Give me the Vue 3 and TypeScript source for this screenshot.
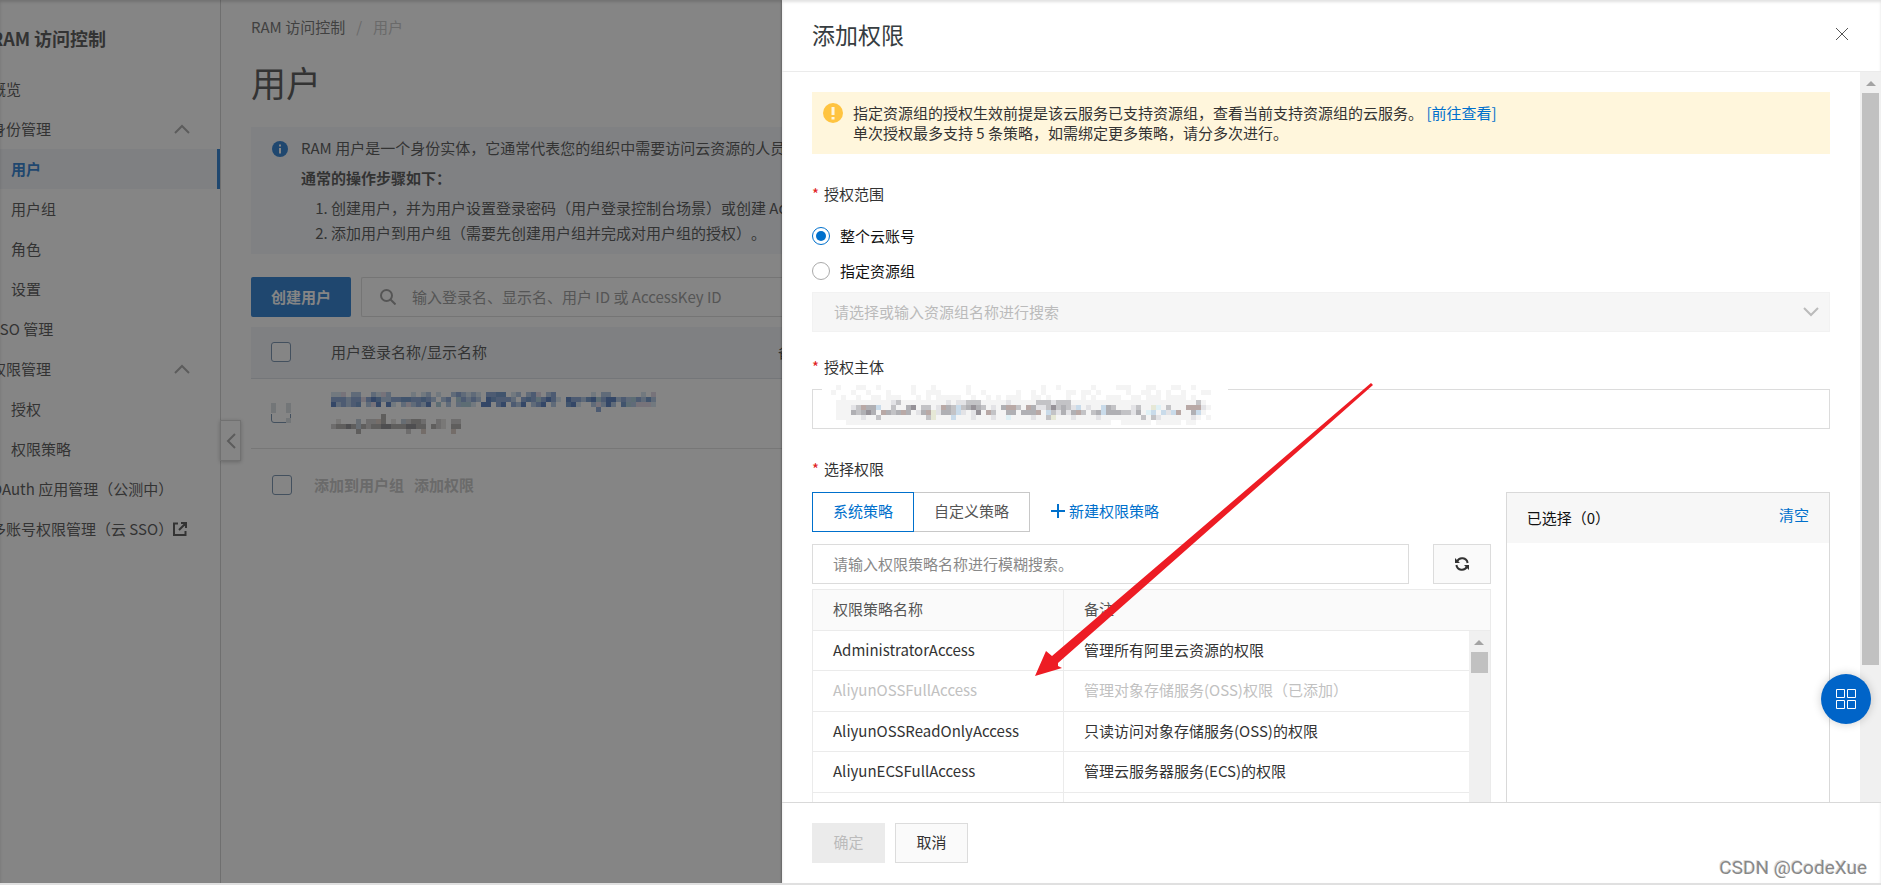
<script setup lang="ts">
import { ref } from 'vue'

interface NavItem {
  label: string
  child?: boolean
  group?: boolean
  active?: boolean
  external?: boolean
}

interface Policy {
  name: string
  note: string
  added?: boolean
}

interface Cell {
  x: number
  y: number
  fill: string
}

const navItems: NavItem[] = [
  { label: '概览' },
  { label: '身份管理', group: true },
  { label: '用户', child: true, active: true },
  { label: '用户组', child: true },
  { label: '角色', child: true },
  { label: '设置', child: true },
  { label: 'SSO 管理' },
  { label: '权限管理', group: true },
  { label: '授权', child: true },
  { label: '权限策略', child: true },
  { label: 'OAuth 应用管理（公测中）' },
  { label: '多账号权限管理（云 SSO）', external: true },
]

const policies: Policy[] = [
  { name: 'AdministratorAccess', note: '管理所有阿里云资源的权限' },
  { name: 'AliyunOSSFullAccess', note: '管理对象存储服务(OSS)权限（已添加）', added: true },
  { name: 'AliyunOSSReadOnlyAccess', note: '只读访问对象存储服务(OSS)的权限' },
  { name: 'AliyunECSFullAccess', note: '管理云服务器服务(ECS)的权限' },
  { name: 'AliyunECSReadOnlyAccess', note: '只读访问云服务器服务(ECS)的权限' },
]

const scope = ref('account')
const keyword = ref('')
const userKeyword = ref('')

// Each character is one 5px block; a dot leaves the block empty.
function blocks(rows: string[], palette: Record<string, string>): Cell[] {
  const cells: Cell[] = []
  rows.forEach((row, r) => {
    Array.from(row).forEach((key, c) => {
      const fill = palette[key]
      if (fill) cells.push({ x: c * 5, y: r * 5, fill })
    })
  })
  return cells
}

const bluePalette = {
  a: '#cfe0ef', b: '#a3bfe0', c: '#7396cf', d: '#5585c4', e: '#3565b4', f: '#dcd2e4', g: '#9cc4d4',
}
const nameCells = blocks(
  [
    'aaf.bb..bafb....a.ab.a..bcbaba.ccdd.ab.bcf.bc.......a.bb......a.f',
    'cccbccfcedbbccddccdcb.bc.gcbcb.edcccb.cdcgceca.eccbdegceebcbgcbdb',
    'ebcbcd.bfe.ea.bfbcbe.g.b.bgga.ee.ce.cbe.bce.b..dea..bfbeb.dgbfffa',
    '.....................................................c...........',
  ],
  bluePalette,
)
const grayPalette = { a: '#e2dfdb', b: '#c6c4c2', c: '#a09d9b', d: '#77777c', e: '#d4c4b8', f: '#b4c2d2' }
const displayCells = blocks(
  [
    '..........c...............',
    '.a...f.bbec.a.fbccb..ba.bb',
    'bccdcfcbccddcccddcc.cba.cc',
    '.....c.........b..e.....e.',
  ],
  grayPalette,
)
const checkCells = blocks(['f..f', 'f..f', '....', '...f'], { f: '#d3d9df' })
const haloCells = blocks(
  [
    '.a...aa..a......a...a......a..............a..a......a....aaa...aa...aa..a...',
    'a...a..a...a....a..aaa.....a..a......a..a.a....aa.aa.a.....a..aa.a.a..a...aa',
    '..a..a..aa.aaa...a.a.aaaaa..a..a.a.aaa..aa.a...a..a.a..aaa..aa.aaa.aaaa.a...',
    '.aaaaaaaaaaaaaaaaaaaaaaaaaaaaaaaaaaaaaaaaaaaaaaaaaaaaaaaaaaaaaaaaaaaaaaaaaa.',
    '.aaaaaaaaaaaaaaaaaaaaaaaaaaaaaaaaaaaaaaaaaaaaaaaaaaaaaaaaaaaaaaaaaaaaaaaaaaa',
    '.aaaaaaaaaaaaaaaaaaaaaaaaaaaaaaaaaaaaaaaaaaaaaaaaaaaaaaaaaaaaaaaaaaaaaaaaaa.',
    '.aaaaaaaaaaaaaaaaaaaaaaaaaaaaaaaaaaaaaaaaaaaaaaaaaaaaaaaaaaaaaaaaaaaaaaaaa.a',
    '...aaaaaaaaaaaaaaaaaaaaaaaaaaaaaaaaaaaaaaaaaaaaaaaaaaaaa..aaaaaa.aaaaa.aa...',
  ],
  { a: '#f4f4f4' },
)
const subjectCells = blocks(
  [
    '........ab.........a.aabbb.....a.....bbbabbb.........................b..',
    'abeccf..b..cd.bb.aecbfbcdcb.a.ceeb.ecaabdbcbaf.a..fcb...ab..gh.b...eeea.',
    'cbcdc.ecbcec.acegaccbfa.ad.eb..cc.ccce.fbacaceb.bcfcccbbac.hf.fafe..cf..',
    '..a..b.........bg...f...a...a..h....a..bg...a....a........b.ba......a...',
  ],
  {
    a: '#e3e3e6', b: '#c3c3c6', c: '#b0b0b4', d: '#969298', e: '#b9a9a6', f: '#c9dbea', g: '#e6e8d6', h: '#dff0f5',
  },
)
</script>

<template>
  <div class="screen">
    <div class="console">
      <aside class="sidebar">
        <div class="sidebar-inner">
          <div class="product">RAM 访问控制</div>
          <nav>
            <a
              v-for="item in navItems"
              :key="item.label"
              href="#"
              class="nav-item"
              :class="{ child: item.child, active: item.active }"
            >
              <span>{{ item.label }}</span>
              <svg v-if="item.external" class="external" viewBox="0 0 14 14" width="14" height="14">
                <path d="M5 1.5H1v11.500h11.500V9M8 1h5v5M12.500 1.500L6 8" />
              </svg>
              <svg v-if="item.group" class="fold" viewBox="0 0 16 10" width="16" height="10">
                <path d="M1 9l7-7 7 7" />
              </svg>
            </a>
          </nav>
        </div>
      </aside>

      <button class="collapse" type="button" aria-label="收起">
        <svg viewBox="0 0 10 16" width="10" height="16"><path d="M9 1L2 8l7 7" /></svg>
      </button>

      <main class="main">
        <div class="crumbs">
          <a href="#">RAM 访问控制</a><span class="slash">/</span><span class="here">用户</span>
        </div>
        <h1>用户</h1>

        <section class="intro">
          <svg class="info" viewBox="0 0 16 16" width="16" height="16">
            <circle cx="8" cy="8" r="8" fill="#0064c8" />
            <path d="M7 3.500h2v2H7zM7 7h2v5.500H7z" fill="#fff" />
          </svg>
          <div class="intro-text">
            <p>RAM 用户是一个身份实体，它通常代表您的组织中需要访问云资源的人员或应用程序。</p>
            <p class="strong">通常的操作步骤如下：</p>
            <ol>
              <li>创建用户，并为用户设置登录密码（用户登录控制台场景）或创建 AccessKey。</li>
              <li>添加用户到用户组（需要先创建用户组并完成对用户组的授权）。</li>
            </ol>
          </div>
        </section>

        <div class="tools">
          <button class="create" type="button">创建用户</button>
          <label class="user-search">
            <svg viewBox="0 0 16 16" width="16" height="16">
              <circle cx="6.500" cy="6.500" r="5.500" /><path d="M10.500 10.500L15.500 15.500" />
            </svg>
            <input
              v-model="userKeyword"
              type="text"
              placeholder="输入登录名、显示名、用户 ID 或 AccessKey ID"
              aria-label="搜索用户"
            />
          </label>
        </div>

        <table class="users">
          <thead>
            <tr>
              <th class="pick"><input type="checkbox" aria-label="全选" /></th>
              <th class="login">用户登录名称/显示名称</th>
              <th>备注</th>
            </tr>
          </thead>
          <tbody>
            <tr>
              <td class="pick">
                <span class="masked">
                  <input type="checkbox" aria-label="选择用户" />
                  <svg viewBox="0 0 20 20" width="20" height="20">
                    <path d="M0 0h20v11H0z" fill="#fff" />
                    <rect v-for="(c, i) in checkCells" :key="i" :x="c.x" :y="c.y" width="5" height="5" :fill="c.fill" />
                  </svg>
                </span>
              </td>
              <td>
                <div class="mosaics">
                  <svg viewBox="0 0 330 20" width="330" height="20">
                    <rect v-for="(c, i) in nameCells" :key="i" :x="c.x" :y="c.y" width="5" height="5" :fill="c.fill" />
                  </svg>
                  <svg viewBox="0 0 330 20" width="330" height="20">
                    <rect v-for="(c, i) in displayCells" :key="i" :x="c.x" :y="c.y" width="5" height="5" :fill="c.fill" />
                  </svg>
                </div>
              </td>
              <td></td>
            </tr>
          </tbody>
        </table>

        <div class="batch">
          <input type="checkbox" aria-label="选择全部用户" />
          <button type="button" disabled>添加到用户组</button>
          <button type="button" disabled>添加权限</button>
        </div>
      </main>
      <div class="mask"></div>
    </div>

    <section class="drawer" role="dialog" aria-labelledby="drawer-title">
      <header class="drawer-head">
        <h2 id="drawer-title">添加权限</h2>
        <button class="close" type="button" aria-label="关闭">
          <svg viewBox="0 0 14 14" width="14" height="14"><path d="M1 1l12 12M13 1L1 13" /></svg>
        </button>
      </header>

      <div class="drawer-body">
        <form class="form" @submit.prevent>
          <div class="notice">
            <svg viewBox="0 0 20 20" width="20" height="20">
              <circle cx="10" cy="10" r="10" fill="#ffc440" />
              <path d="M8.500 4h3v8h-3zM8.500 14h3v2.500h-3z" fill="#fff6dc" />
            </svg>
            <p>
              指定资源组的授权生效前提是该云服务已支持资源组，查看当前支持资源组的云服务。
              <a href="#">[前往查看]</a><br />单次授权最多支持 5 条策略，如需绑定更多策略，请分多次进行。
            </p>
          </div>

          <div class="field-label scope-label"><i>*</i>授权范围</div>
          <label class="radio"><input v-model="scope" type="radio" name="scope" value="account" />整个云账号</label>
          <label class="radio"><input v-model="scope" type="radio" name="scope" value="group" />指定资源组</label>
          <div class="group-select">
            <select disabled aria-label="资源组">
              <option>请选择或输入资源组名称进行搜索</option>
            </select>
            <svg viewBox="0 0 16 10" width="16" height="10"><path d="M1 1l7 7 7-7" /></svg>
          </div>

          <label class="field-label" for="principal"><i>*</i>授权主体</label>
          <div class="principal">
            <input id="principal" type="text" />
            <svg viewBox="0 0 406 41" width="406" height="41">
              <path d="M0 0h406v41H0z" fill="#fff" />
              <g transform="translate(9 0)">
                <rect v-for="(c, i) in haloCells" :key="i" :x="c.x" :y="c.y" width="5" height="5" :fill="c.fill" />
              </g>
              <g transform="translate(29 15)">
                <rect v-for="(c, i) in subjectCells" :key="i" :x="c.x" :y="c.y" width="5" height="5" :fill="c.fill" />
              </g>
            </svg>
          </div>

          <div class="field-label"><i>*</i>选择权限</div>
          <div class="picker">
            <div class="available">
              <div class="tabs">
                <button class="tab on" type="button">系统策略</button>
                <button class="tab" type="button">自定义策略</button>
                <a class="new-policy" href="#">
                  <svg viewBox="0 0 14 14" width="14" height="14"><path d="M7 0v14M0 7h14" /></svg>新建权限策略
                </a>
              </div>
              <div class="filter">
                <input
                  v-model="keyword"
                  type="text"
                  placeholder="请输入权限策略名称进行模糊搜索。"
                  aria-label="权限策略名称"
                />
                <button type="button" aria-label="刷新">
                  <svg viewBox="0 0 14 14" width="14" height="14">
                    <path d="M2 4.500A5.600 5.600 0 0 1 12.600 6M12 9.500A5.600 5.600 0 0 1 1.400 8" />
                    <path class="tip" d="M0 1v5h5zM14 13V8H9z" />
                  </svg>
                </button>
              </div>
              <div class="policy-box">
                <table class="policies">
                  <thead>
                    <tr><th class="policy-name">权限策略名称</th><th>备注</th></tr>
                  </thead>
                  <tbody>
                    <tr v-for="p in policies" :key="p.name" :class="{ added: p.added }">
                      <td>{{ p.name }}</td>
                      <td>{{ p.note }}</td>
                    </tr>
                  </tbody>
                </table>
                <div class="bar inner-bar"><span class="up"></span><span class="thumb"></span></div>
              </div>
            </div>
            <div class="chosen">
              <div class="chosen-head"><span>已选择（0）</span><a href="#">清空</a></div>
            </div>
          </div>
        </form>
        <div class="bar"><span class="up"></span><span class="thumb"></span></div>
      </div>

      <footer class="drawer-foot">
        <button class="ok" type="button" disabled>确定</button>
        <button class="cancel" type="button">取消</button>
      </footer>
    </section>

    <button class="fab" type="button" aria-label="工具">
      <svg viewBox="0 0 20 20" width="20" height="20">
        <path d="M.5.500h8v8h-8zM11.500.500h8v8h-8zM.5 11.500h8v8h-8zM11.500 11.500h8v8h-8z" />
      </svg>
    </button>
    <svg class="pointer" viewBox="0 0 340 295" width="340" height="295">
      <path d="M1 293L12 268L18 273L337 0L339 2L24 280L24 283L28 285Z" />
    </svg>
    <div class="watermark">CSDN @CodeXue</div>
  </div>
</template>

<style>
body {
  margin: 0;
}
</style>

<style scoped>
.screen {
  --blue: #0070cc;
  --drawer-left: 782px;
  position: relative;
  box-sizing: border-box;
  height: 100vh;
  overflow: hidden;
  border-bottom: 2px solid #e0e0e0;
  background: #fff;
  color: #333;
  font: 15px/20px "Noto Sans CJK SC", "Open Sans", sans-serif;
  text-spacing-trim: space-all;
}
.screen *,
.screen *::before {
  box-sizing: border-box;
}
button,
input,
select {
  margin: 0;
  font: inherit;
  color: inherit;
}
input::placeholder {
  color: #888;
  opacity: 1;
}
a {
  color: var(--blue);
  text-decoration: none;
}
svg {
  display: block;
  flex: none;
  fill: none;
}
p,
h1,
h2,
ol {
  margin: 0;
}

.console {
  --blue: #0064c8;
  position: relative;
  display: flex;
  width: var(--drawer-left);
  height: 100%;
  overflow: hidden;
}
.mask {
  position: absolute;
  inset: 0;
  background: rgba(51, 51, 51, 0.6);
  box-shadow: inset 0 2px 3px rgba(0, 0, 0, 0.15);
}
.sidebar {
  flex: none;
  display: flex;
  justify-content: flex-end;
  width: 221px;
  overflow: hidden;
  border-right: 1px solid #c8c8c8;
}
.sidebar-inner {
  flex: 0 0 249px;
  min-width: 0;
}
.product {
  padding: 23px 20px 16px;
  font-size: 18px;
  line-height: 30px;
  font-weight: 700;
}
.nav-item {
  display: flex;
  align-items: center;
  height: 40px;
  padding: 0 30px 0 20px;
  color: #333;
  white-space: nowrap;
}
.nav-item.child {
  padding-left: 40px;
}
.nav-item.active {
  border-right: 3px solid var(--blue);
  background: #eff3f8;
  color: var(--blue);
  font-weight: 700;
}
.fold {
  margin-left: auto;
  stroke: #999;
  stroke-width: 2;
}
.external {
  stroke: #333;
  stroke-width: 2;
}
.collapse {
  position: absolute;
  top: 420px;
  left: 220px;
  display: grid;
  place-items: center;
  width: 21px;
  height: 41px;
  padding: 0;
  border: 1px solid #ccc;
  background: #fff;
  box-shadow: 0 1px 4px rgba(0, 0, 0, 0.3);
}
.collapse svg {
  stroke: #999;
  stroke-width: 2;
}

.main {
  flex: 1;
  min-width: 0;
  padding: 17px 0 0 30px;
}
.crumbs {
  display: flex;
}
.crumbs a {
  color: #555;
}
.slash {
  margin: 0 11px;
  color: #bbb;
}
.here {
  color: #bbb;
}
h1 {
  margin: 22px 0;
  font-size: 35px;
  line-height: 46px;
  font-weight: 400;
}
.intro {
  display: flex;
  gap: 13px;
  height: 127px;
  padding: 11px 21px;
  background: #f2f6fb;
}
.info {
  margin-top: 3px;
}
.intro-text {
  white-space: nowrap;
}
.intro-text p {
  margin-bottom: 10px;
}
.strong {
  font-weight: 700;
}
.intro-text ol {
  margin-top: -3px;
  padding-left: 30px;
}
.intro-text li {
  line-height: 25px;
}
.tools {
  display: flex;
  gap: 10px;
  margin: 23px 0 10px;
}
.create {
  width: 100px;
  height: 40px;
  padding: 0;
  border: 0;
  border-radius: 2px;
  background: var(--blue);
  color: #fff;
  font-weight: 700;
}
.user-search {
  flex: 1;
  display: flex;
  align-items: center;
  gap: 16px;
  padding: 0 18px;
  border: 1px solid #d8d8d8;
  border-right: 0;
  border-radius: 2px 0 0 2px;
}
.user-search svg {
  stroke: #888;
  stroke-width: 2;
}
.user-search input {
  flex: 1;
  padding: 0;
  border: 0;
  background: none;
}
input[type="checkbox"] {
  display: block;
  flex: none;
  width: 20px;
  height: 20px;
  appearance: none;
  border: 1px solid #5b7c9e;
  border-radius: 3px;
  background: #fff;
}
.users {
  width: 100%;
  border-collapse: collapse;
  table-layout: fixed;
}
.users th {
  height: 51px;
  padding: 0;
  border-bottom: 1px solid #d5dae0;
  background: #eff3f8;
  font-weight: 400;
  text-align: left;
  white-space: nowrap;
}
.users .pick {
  width: 80px;
  padding-left: 20px;
}
.users .login {
  width: 447px;
}
.users td {
  height: 70px;
  padding: 0;
  border-bottom: 1px solid #ddd;
}
.masked {
  position: relative;
  display: block;
  width: 20px;
}
.masked svg {
  position: absolute;
  top: 0;
  left: 0;
}
.mosaics {
  display: grid;
  gap: 2px;
}
.batch {
  display: flex;
  align-items: center;
  gap: 10px;
  margin: 26px 0 0 21px;
}
.batch input {
  margin-right: 12px;
}
.batch button {
  padding: 0;
  border: 0;
  background: none;
  color: #bbb;
  font-weight: 700;
}

.drawer {
  position: absolute;
  inset: 0 0 0 var(--drawer-left);
  display: flex;
  flex-direction: column;
  background: #fff;
  box-shadow: 0 0 2px rgba(0, 0, 0, 0.4), inset 0 2px 3px rgba(0, 0, 0, 0.12);
}
.drawer-head {
  display: flex;
  align-items: center;
  justify-content: space-between;
  height: 72px;
  padding: 0 32px 3px 30px;
  border-bottom: 1px solid #ebebeb;
}
h2 {
  color: #373d41;
  font-size: 23px;
  line-height: 32px;
  font-weight: 400;
}
.close {
  padding: 0;
  border: 0;
  background: none;
}
.close svg {
  stroke: #555;
}
.drawer-body {
  flex: 1;
  min-height: 0;
  display: flex;
}
.form {
  flex: 1;
  min-width: 0;
  overflow: hidden;
  padding: 20px 30px 0;
}
.bar {
  flex: none;
  display: flex;
  flex-direction: column;
  align-items: center;
  width: 21px;
  background: #f0f0f0;
}
.up {
  margin: 9px 0 7px;
  border: 5px solid transparent;
  border-top: 0;
  border-bottom-color: #a3a3a3;
}
.thumb {
  width: 17px;
  height: calc(100% - 158px);
  background: #c1c1c1;
}
.notice {
  display: flex;
  gap: 10px;
  padding: 11px 11px;
  background: #fff6dc;
}
.field-label {
  display: flex;
  gap: 5px;
  margin: 25px 0 12px;
}
.field-label i {
  color: #e02020;
  font-style: normal;
}
.scope-label {
  margin: 30px 0 22px;
}
.radio {
  display: flex;
  align-items: center;
  gap: 10px;
  margin-bottom: 15px;
  color: #111;
}
.radio input {
  display: grid;
  place-items: center;
  width: 18px;
  height: 18px;
  appearance: none;
  border: 1px solid #aaa;
  border-radius: 50%;
  background: #fff;
}
.radio input:checked {
  border-color: var(--blue);
}
.radio input:checked::before {
  content: "";
  width: 10px;
  height: 10px;
  border-radius: 50%;
  background: var(--blue);
}
.group-select {
  display: grid;
  align-items: center;
  margin-top: -4px;
}
.group-select select,
.group-select svg {
  grid-area: 1 / 1;
}
.group-select select {
  width: 100%;
  height: 40px;
  padding: 0 21px;
  appearance: none;
  border: 1px solid #f2f2f2;
  border-radius: 0;
  background: #f6f6f6;
  color: #bbb;
  opacity: 1;
}
.group-select svg {
  justify-self: end;
  margin-right: 11px;
  stroke: #bbb;
  stroke-width: 2;
}
.principal {
  position: relative;
}
.principal input {
  display: block;
  width: 100%;
  height: 40px;
  padding: 0 20px;
  border: 1px solid #dcdcdc;
}
.principal svg {
  position: absolute;
  top: -4px;
  left: 10px;
}
.principal + .field-label {
  margin: 30px 0 13px;
}
.picker {
  display: flex;
  gap: 15px;
}
.available {
  flex: 680 1 0;
}
.chosen {
  flex: 323 1 0;
  height: 520px;
  border: 1px solid #d9d9d9;
}
.chosen-head {
  display: flex;
  justify-content: space-between;
  height: 50px;
  padding: 12px 20px;
  background: #f7f7f7;
  color: #111;
}
.chosen-head span {
  line-height: 26px;
}
.tabs {
  display: flex;
  align-items: center;
}
.tab {
  height: 40px;
  padding: 0 20px 2px;
  border: 1px solid #c8c8c8;
  border-left: 0;
  background: #fff;
  color: #555;
}
.tab.on {
  border: 1px solid var(--blue);
  color: var(--blue);
}
.new-policy {
  display: flex;
  align-items: center;
  gap: 4px;
  margin-left: 21px;
  padding-bottom: 2px;
}
.new-policy svg {
  stroke: var(--blue);
  stroke-width: 2;
}
.filter {
  display: flex;
  gap: 24px;
  margin: 12px 0 5px;
}
.filter input {
  flex: 1;
  min-width: 0;
  height: 40px;
  padding: 0 20px 2px;
  border: 1px solid #dcdcdc;
}
.filter button {
  display: grid;
  place-items: center;
  width: 58px;
  border: 1px solid #dcdcdc;
  background: #fafafa;
}
.filter svg {
  stroke: #333;
  stroke-width: 2;
}
.filter .tip {
  fill: #333;
  stroke: none;
}
.policy-box {
  position: relative;
  border: 1px solid #ebebeb;
}
.policies {
  width: 100%;
  border-collapse: separate;
  border-spacing: 0;
  table-layout: fixed;
}
.policies th,
.policies td {
  padding: 0 20px 2px;
  border-bottom: 1px solid #ebebeb;
  text-align: left;
  white-space: nowrap;
}
.policies th {
  height: 41px;
  background: #fafafa;
  color: #555;
  font-weight: 400;
}
.policies .policy-name {
  width: 251px;
}
.policies th:first-child,
.policies td:first-child {
  border-right: 1px solid #ebebeb;
}
.policies td {
  height: 40px;
}
.policies tr:nth-child(even) td {
  height: 41px;
}
.policies .added td {
  color: #c1c1c1;
}
.inner-bar {
  position: absolute;
  top: 41px;
  right: 0;
  bottom: 0;
}
.inner-bar .thumb {
  height: 21px;
}
.drawer-foot {
  display: flex;
  gap: 10px;
  height: 81px;
  padding: 20px 30px;
  border-top: 1px solid #d9d9d9;
}
.drawer-foot button {
  min-width: 73px;
  height: 40px;
  padding: 0 20px 2px;
  border: 1px solid #dcdcdc;
  background: #fafafa;
}
.drawer-foot .ok {
  border-color: #ebebeb;
  background: #ebebeb;
  color: #bbb;
}

.fab {
  position: absolute;
  right: 10px;
  bottom: 159px;
  display: grid;
  place-items: center;
  width: 50px;
  height: 50px;
  padding: 0;
  border: 0;
  border-radius: 50%;
  background: #0064c8;
  box-shadow: 0 0 10px rgba(0, 0, 0, 0.2);
}
.fab svg {
  stroke: #fff;
}
.pointer {
  position: absolute;
  top: 383px;
  left: 1034px;
  fill: #ed1c24;
  pointer-events: none;
}
.watermark {
  position: absolute;
  right: 14px;
  bottom: 3px;
  color: #888;
  font: 19px/24px Roboto, "Liberation Sans", sans-serif;
  text-shadow: 1px 1px 0 #fff, -1px -1px 0 #ddd;
}
</style>
